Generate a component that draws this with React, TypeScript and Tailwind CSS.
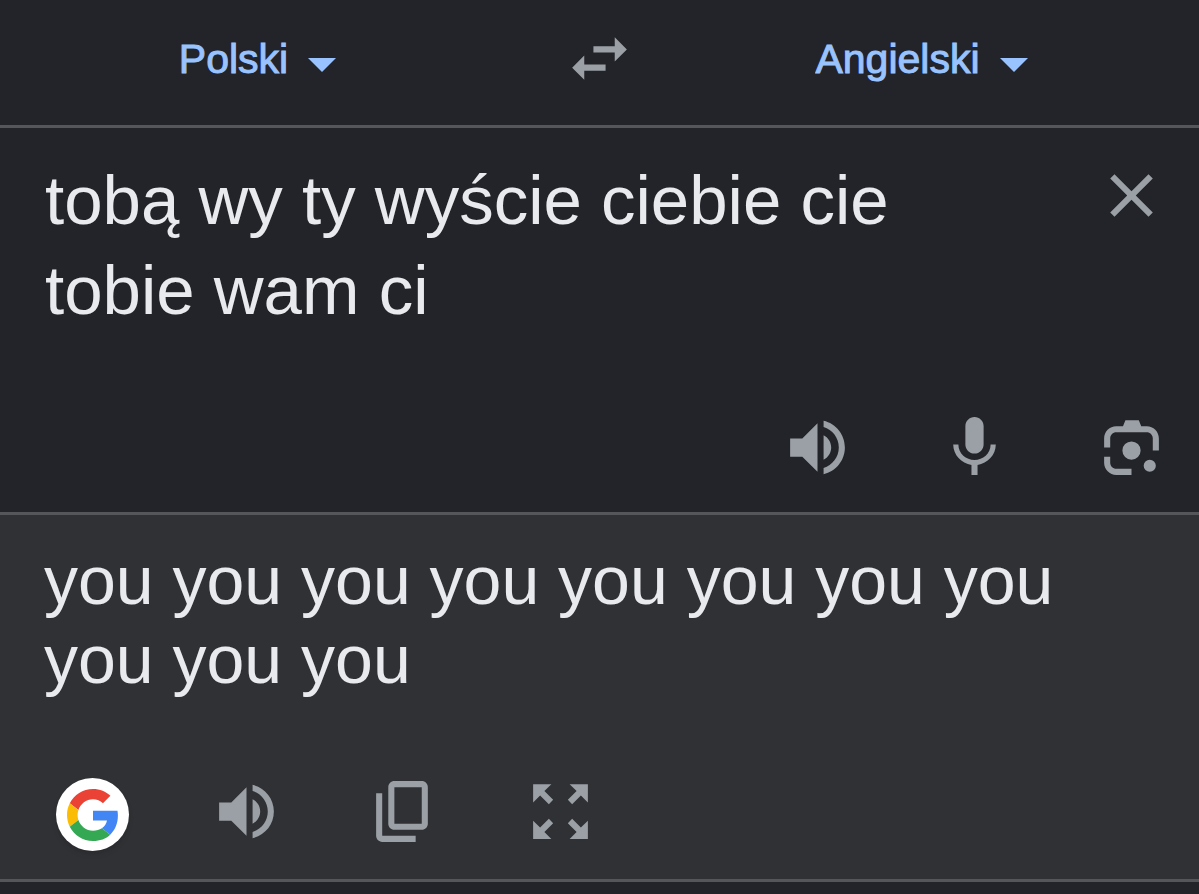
import { useState } from "react";

const ICONS = {
  swap: "M6.99 11L3 15l3.99 4v-3H14v-2H6.99v-3zM21 9l-3.99-4v3H10v2h7.01v3L21 9z",
  close: "M19 6.41L17.59 5 12 10.59 6.41 5 5 6.41 10.59 12 5 17.59 6.41 19 12 13.41 17.59 19 19 17.59 13.41 12z",
  speaker:
    "M3 9v6h4l5 5V4L7 9H3zm13.5 3c0-1.77-1.02-3.29-2.5-4.03v8.05c1.48-.73 2.5-2.25 2.5-4.02zM14 3.23v2.06c2.89.86 5 3.54 5 6.71s-2.11 5.85-5 6.71v2.06c4.01-.91 7-4.49 7-8.77s-2.99-7.86-7-8.77z",
  mic: "M12 14c1.66 0 2.99-1.34 2.99-3L15 5c0-1.66-1.34-3-3-3S9 3.34 9 5v6c0 1.66 1.34 3 3 3zm5.3-3c0 3-2.54 5.1-5.3 5.1S6.7 14 6.7 11H5c0 3.41 2.72 6.23 6 6.72V21h2v-3.28c3.28-.48 6-3.3 6-6.72h-1.7z",
  lens: "M3 12V9c0-2.21 1.79-4 4-4h2.2L10 3h4.4l.8 2H17c2.21 0 4 1.79 4 4v4h-2V9c0-1.1-.9-2-2-2H7c-1.1 0-2 .9-2 2v3H3zm0 3h2v2c0 1.1.9 2 2 2h5v2H7c-2.21 0-4-1.79-4-4v-2zm9-5a3 3 0 1 1 0 6 3 3 0 0 1 0-6zm6 6a2 2 0 1 1 0 4 2 2 0 0 1 0-4z",
  copy: "M18 2H9c-1.1 0-2 .9-2 2v12c0 1.1.9 2 2 2h9c1.1 0 2-.9 2-2V4c0-1.1-.9-2-2-2zm0 14H9V4h9v12zM3 6v14c0 1.1.9 2 2 2h11v-2H5V6H3z",
  expand:
    "M15 3l2.3 2.3-2.89 2.87 1.42 1.42L18.7 6.7 21 9V3h-6zM3 9l2.3-2.3 2.87 2.89 1.42-1.42L6.7 5.3 9 3H3v6zm6 12l-2.3-2.3 2.89-2.87-1.42-1.42L5.3 17.3 3 15v6h6zm12-6l-2.3 2.3-2.87-2.89-1.42 1.42 2.89 2.87L15 21h6v-6z",
};

function IconButton({ icon, label, onClick }: { icon: keyof typeof ICONS; label: string; onClick?: () => void }) {
  return (
    <button type="button" aria-label={label} onClick={onClick} className="shrink-0 text-[#9aa0a6]">
      <svg className="block size-[73px]" viewBox="0 0 24 24" fill="currentColor" aria-hidden="true">
        <path d={ICONS[icon]} />
      </svg>
    </button>
  );
}

function LanguageSelect({
  label,
  value,
  onChange,
}: {
  label: string;
  value: string;
  onChange: (value: string) => void;
}) {
  return (
    <label className="flex items-center gap-5 text-[#99c3ff]">
      <select
        aria-label={label}
        value={value}
        onChange={(e) => onChange(e.target.value)}
        className="appearance-none field-sizing-content bg-transparent text-[41px] leading-[48px] [-webkit-text-stroke:1px_currentColor] focus:outline-none"
      >
        <option value="Polski">Polski</option>
        <option value="Angielski">Angielski</option>
      </select>
      <svg className="mt-3 w-7 h-3.5" viewBox="0 0 28 14" fill="currentColor" aria-hidden="true">
        <path d="M0 0h28L14 14z" />
      </svg>
    </label>
  );
}

function GoogleButton() {
  return (
    <button
      type="button"
      aria-label="Google"
      className="flex size-[73px] shrink-0 items-center justify-center rounded-full bg-white shadow-md"
    >
      <svg className="size-[52px]" viewBox="0 0 48 48" aria-hidden="true">
        <path fill="#EA4335" d="M24 9.5c3.54 0 6.71 1.22 9.21 3.6l6.85-6.85C35.9 2.38 30.47 0 24 0 14.62 0 6.51 5.38 2.56 13.22l7.98 6.19C12.43 13.72 17.74 9.5 24 9.5z" />
        <path fill="#4285F4" d="M46.98 24.55c0-1.57-.15-3.09-.38-4.55H24v9.02h12.94c-.58 2.96-2.26 5.48-4.78 7.18l7.73 6c4.51-4.18 7.09-10.36 7.09-17.65z" />
        <path fill="#FBBC05" d="M10.53 28.59c-.48-1.45-.76-2.99-.76-4.59s.27-3.14.76-4.59l-7.98-6.19C.92 16.46 0 20.12 0 24c0 3.88.92 7.54 2.56 10.78l7.97-6.19z" />
        <path fill="#34A853" d="M24 48c6.48 0 11.93-2.13 15.89-5.81l-7.73-6c-2.15 1.45-4.92 2.3-8.16 2.3-6.26 0-11.57-4.22-13.47-9.91l-7.98 6.19C6.51 42.62 14.62 48 24 48z" />
      </svg>
    </button>
  );
}

export default function App() {
  const [source, setSource] = useState("Polski");
  const [target, setTarget] = useState("Angielski");
  const [text, setText] = useState("tobą wy ty wyście ciebie cie tobie wam ci");

  const handleSwap = () => {
    setSource(target);
    setTarget(source);
  };

  return (
    <div className="min-h-screen bg-[#232429] font-['Liberation_Sans',Arial,sans-serif] text-[#e8eaed]">
      {/* Languages */}
      <header className="grid grid-cols-[1fr_auto_1fr] items-center border-b-3 border-[#54565a] pt-[22px] pb-[30px]">
        <div className="flex justify-center pr-12">
          <LanguageSelect label="Język źródłowy" value={source} onChange={setSource} />
        </div>
        <IconButton icon="swap" label="Zamień języki" onClick={handleSwap} />
        <div className="flex justify-center pl-2">
          <LanguageSelect label="Język docelowy" value={target} onChange={setTarget} />
        </div>
      </header>

      {/* Source text */}
      <section className="border-b-3 border-[#54565a] pt-7 pr-[31px] pb-7 pl-[45px]">
        <div className="flex items-start gap-14">
          <textarea
            aria-label="Tekst do przetłumaczenia"
            rows={2}
            value={text}
            onChange={(e) => setText(e.target.value)}
            className="block min-w-0 flex-1 resize-none overflow-hidden bg-transparent text-[69px] leading-[90px] focus:outline-none"
          />
          <div className="pt-[3px]">
            <IconButton icon="close" label="Wyczyść" onClick={() => setText("")} />
          </div>
        </div>
        <div className="mt-[75px] flex justify-end gap-[84px]">
          <IconButton icon="speaker" label="Odsłuchaj" />
          <IconButton icon="mic" label="Mów" />
          <IconButton icon="lens" label="Obiektyw" />
        </div>
      </section>

      {/* Translation */}
      <section className="border-b-3 border-[#54565a] bg-[#303135] pt-[26px] pb-7">
        <p className="px-11 text-[68px] leading-[79px]">you you you you you you you you you you you</p>
        <div className="mt-[76px] flex items-end gap-[81px] pl-14">
          <GoogleButton />
          <div className="flex gap-[84px] pb-[3px]">
            <IconButton icon="speaker" label="Odsłuchaj tłumaczenie" />
            <IconButton icon="copy" label="Kopiuj" />
            <IconButton icon="expand" label="Pełny ekran" />
          </div>
        </div>
      </section>
    </div>
  );
}
